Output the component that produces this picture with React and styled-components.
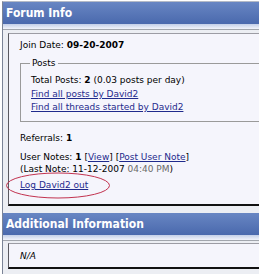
import styled, { createGlobalStyle } from "styled-components";

const Global = createGlobalStyle`
  html, body {
    margin: 0;
    padding: 0;
    background: #ffffff;
    overflow: hidden;
  }
  body {
    font-family: "DejaVu Sans", Verdana, sans-serif;
    font-size: 9px;
    color: #000;
  }
`

const Frame = styled.div`
  width: 300px;
  margin: 1px 0 0 2px;
  padding-bottom: 5px;
  border-left: 1px solid #7b8497;
  border-top: 1px solid #b4bac6;
  background: #eceef3;
`

const Head = styled.div`
  height: 22px;
  display: flex;
  align-items: center;
  padding-left: 3px;
  background: linear-gradient(#6886c3, #4a69ad);
  color: #fff;
  font-family: "DejaVu Sans Condensed", "DejaVu Sans", sans-serif;
  font-weight: bold;
  font-size: 12px;
`

const Band = styled.div`
  height: 5px;
  background: linear-gradient(#c3cfe8, #f2f4fb);
  border-bottom: 1px solid #a2a6ad;
`

const Body = styled.div`
  padding: ${p => p.$pad || "3px 0 7px 5px"};
`

const Box = styled.div`
  background: #f5f5fc;
  border-top: 1px solid #9c9ca4;
  border-left: 1px solid #5a5a60;
  border-bottom: 2px solid #111;
  padding: ${p => p.$pad || "6px 11px"};
`

const Line = styled.div`
  line-height: 12px;
  margin-top: ${p => p.$top || 0}px;
`

const Fieldset = styled.fieldset`
  margin: 6px 0 0 0;
  padding: 5px 10px 8px;
  border: 1px solid #9a9a9a;
  border-right: none;
  legend {
    line-height: 12px;
    padding: 0 2px;
    margin-left: -1px;
  }
`

const Link = styled.a`
  color: #1f2a8c;
  text-decoration: underline;
`

const Gray = styled.span`
  color: #6a6a6a;
`

const Circled = styled.div`
  position: relative;
  line-height: 12px;
  margin-top: 4px;
`

const Oval = styled.svg`
  position: absolute;
  left: -15px;
  top: -7px;
  pointer-events: none;
`

const Ital = styled.i`
  font-size: 9px;
`

export default function App() {
  return (
    <>
      <Global />
      <Frame>
        <Head>Forum Info</Head>
        <Band />
        <Body>
          <Box $pad="5px 11px 13px">
            <Line>Join Date: <b>09-20-2007</b></Line>
            <Fieldset>
              <legend>Posts</legend>
              <Line>Total Posts: <b>2</b> (0.03 posts per day)</Line>
              <Line $top={2}><Link href="#">Find all posts by David2</Link></Line>
              <Line $top={1}><Link href="#">Find all threads started by David2</Link></Line>
            </Fieldset>
            <Line $top={10}>Referrals: <b>1</b></Line>
            <Line $top={7}>
              User Notes: <b>1</b> [<Link href="#">View</Link>] [<Link href="#">Post User Note</Link>]
            </Line>
            <Line>(Last Note: 11-12-2007 <Gray>04:40 PM</Gray>)</Line>
            <Circled>
              <Link href="#">Log David2 out</Link>
              <Oval width="106" height="27" viewBox="0 0 106 27">
                <ellipse cx="53" cy="13.5" rx="51.5" ry="12.5" fill="none" stroke="#c2324f" strokeWidth="1" />
              </Oval>
            </Circled>
          </Box>
        </Body>
        <Head>Additional Information</Head>
        <Band />
        <Body $pad="2px 0 0 5px">
          <Box $pad="7px 11px 6px">
            <Ital>N/A</Ital>
          </Box>
        </Body>
      </Frame>
    </>
  );
}
